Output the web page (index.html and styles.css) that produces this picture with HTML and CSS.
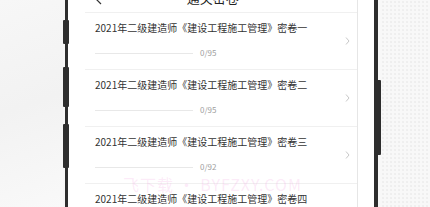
FILE: index.html
```html
<!DOCTYPE html>
<html lang="zh-CN">
<head>
<meta charset="utf-8">
<link rel="stylesheet" href="styles.css">
</head>
<body>
<div class="stage">
  <div class="bg bg-left"></div>
  <div class="rail rail-left">
    <div class="bump b1"></div>
    <div class="bump b2"></div>
    <div class="bump b3"></div>
  </div>
  <div class="screen">
    <div class="app">
      <div class="header">
        <svg class="back" width="6" height="10" viewBox="0 0 6 10"><path d="M5 1 L1 5 L5 9" fill="none" stroke="#333" stroke-width="1.2"/></svg>
        <span class="htitle">通关密卷</span>
        <span class="hright">答题模式 ▾</span>
      </div>
      <div class="row">
        <div class="main">
          <div class="title">2021年二级建造师《建设工程施工管理》密卷一</div>
          <div class="prog"><span class="bar"></span><span class="num">0/95</span></div>
        </div>
        <svg class="chev" width="5" height="8" viewBox="0 0 5 8"><path d="M1 0.5 L4 4 L1 7.5" fill="none" stroke="#c8c8c8" stroke-width="1"/></svg>
      </div>
      <div class="row">
        <div class="main">
          <div class="title">2021年二级建造师《建设工程施工管理》密卷二</div>
          <div class="prog"><span class="bar"></span><span class="num">0/95</span></div>
        </div>
        <svg class="chev" width="5" height="8" viewBox="0 0 5 8"><path d="M1 0.5 L4 4 L1 7.5" fill="none" stroke="#c8c8c8" stroke-width="1"/></svg>
      </div>
      <div class="row">
        <div class="main">
          <div class="title">2021年二级建造师《建设工程施工管理》密卷三</div>
          <div class="prog"><span class="bar"></span><span class="num">0/92</span></div>
        </div>
        <svg class="chev" width="5" height="8" viewBox="0 0 5 8"><path d="M1 0.5 L4 4 L1 7.5" fill="none" stroke="#c8c8c8" stroke-width="1"/></svg>
      </div>
      <div class="row">
        <div class="main">
          <div class="title">2021年二级建造师《建设工程施工管理》密卷四</div>
          <div class="prog"><span class="bar"></span><span class="num">0/95</span></div>
        </div>
        <svg class="chev" width="5" height="8" viewBox="0 0 5 8"><path d="M1 0.5 L4 4 L1 7.5" fill="none" stroke="#c8c8c8" stroke-width="1"/></svg>
      </div>
      <div class="watermark">飞下载 · BYFZXY.COM</div>
    </div>
  </div>
  <div class="rail rail-right">
    <div class="bump b4"></div>
  </div>
  <div class="bg bg-right"></div>
</div>
</body>
</html>
```
FILE: styles.css
```css
* { box-sizing: border-box; }
html, body { margin: 0; padding: 0; }
body {
  width: 430px;
  height: 207px;
  overflow: hidden;
  font-family: "Noto Sans CJK SC", "Noto Sans", sans-serif;
  background: #f6f6f6;
}
.stage {
  display: flex;
  width: 430px;
  height: 207px;
}
.bg { height: 207px; }
.bg-left {
  flex: 0 0 63px;
  background: linear-gradient(160deg, #f7f7f7 0%, #f2f2f2 50%, #f9f9f9 100%);
}
.bg-right {
  flex: 1 1 auto;
  background-color: #f8f8f8;
  background-image: radial-gradient(#e4e4e4 0.6px, transparent 0.8px);
  background-size: 4px 4px;
}
.rail {
  display: flex;
  flex-direction: column;
  height: 207px;
}
.rail-left {
  flex: 0 0 6px;
  background: linear-gradient(90deg, transparent 2px, #2e2e2e 2px, #2e2e2e 5px, #ffffff 5px);
}
.rail-right {
  flex: 0 0 7px;
  background: linear-gradient(90deg, #2e2e2e 0, #2e2e2e 4px, #f8f8f8 4px);
}
.bump {
  background: #2e2e2e;
  border-radius: 1px;
}
.b1 { margin-top: 20px; height: 24px; }
.b2 { margin-top: 23px; height: 40px; }
.b3 { margin-top: 17px; height: 44px; }
.b4 { margin-top: 80px; height: 75px; }
.screen {
  flex: 0 0 305px;
  background: #ffffff;
  padding-left: 16px;
  padding-right: 16px;
}
.app {
  position: relative;
  height: 207px;
  border-right: 1px solid #e6e6e6;
  background: #fff;
  overflow: hidden;
}
.header {
  height: 13px;
  border-bottom: 1px solid #f0f0f0;
  display: flex;
  align-items: flex-start;
  justify-content: space-between;
  padding: 0 8px 0 11px;
}
.back { margin-top: -5px; }
.htitle {
  margin-top: -10px;
  font-size: 13px;
  line-height: 15px;
  color: #222;
  margin-left: 22px;
}
.hright {
  margin-top: -11px;
  font-size: 10px;
  line-height: 12px;
  color: #555;
}
.row {
  display: flex;
  align-items: center;
  height: 57px;
  border-bottom: 1px solid #f0f0f0;
  padding: 0 7px 0 10px;
}
.main {
  flex: 1 1 auto;
  padding-top: 8px;
  padding-bottom: 11px;
}
.title {
  font-size: 10px;
  line-height: 14px;
  color: #333;
  white-space: nowrap;
}
.prog {
  margin-top: 13px;
  display: flex;
  align-items: center;
  height: 10px;
}
.bar {
  width: 98px;
  height: 1px;
  background: #e8e8e8;
}
.num {
  margin-left: 7px;
  font-size: 8px;
  line-height: 10px;
  color: #a0a0a0;
}
.chev { flex: 0 0 5px; }
.watermark {
  position: absolute;
  left: 38px;
  top: 175px;
  font-size: 16px;
  line-height: 18px;
  letter-spacing: 1px;
  color: rgba(240, 150, 220, 0.2);
  white-space: nowrap;
  pointer-events: none;
}
```
